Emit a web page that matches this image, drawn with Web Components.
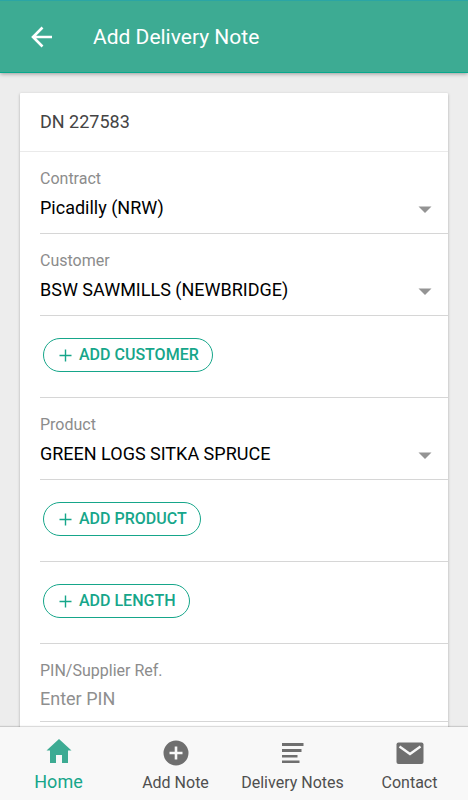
<!DOCTYPE html>
<html lang="en">
<head>
<meta charset="utf-8">
<meta name="viewport" content="width=device-width, initial-scale=1">
<title>Add Delivery Note</title>
<style>
  :root {
    --brand: #3dab93;
    --brand-strong: #16a68a;
    --line: #d6d6d6;
    --muted: #8c8c8c;
  }
  html, body { height: 100%; margin: 0; }
  body { font-family: Roboto, "Liberation Sans", sans-serif; color: #000; background: #ededed; }
</style>
</head>
<body>
<delivery-app></delivery-app>

<template id="t-app">
  <style>
    :host { display: flex; flex-direction: column; height: 100vh; }
    main { flex: 1; min-height: 0; overflow: hidden; padding: 20px 20px 0; }
    nav { display: grid; grid-template-columns: repeat(4, 1fr); flex: none; background: #f8f8f8;
      box-shadow: 0 -1px 1px rgba(0,0,0,.14); position: relative; }
  </style>
  <app-header>Add Delivery Note</app-header>
  <main>
    <form-card>
      <span slot="title">DN 227583</span>
      <select-field label="Contract" value="Picadilly (NRW)"></select-field>
      <select-field label="Customer" value="BSW SAWMILLS (NEWBRIDGE)"></select-field>
      <add-row>ADD CUSTOMER</add-row>
      <select-field label="Product" value="GREEN LOGS SITKA SPRUCE"></select-field>
      <add-row>ADD PRODUCT</add-row>
      <add-row>ADD LENGTH</add-row>
      <text-field label="PIN/Supplier Ref." placeholder="Enter PIN"></text-field>
    </form-card>
  </main>
  <nav aria-label="Main">
    <nav-tab active>
      <svg slot="icon" width="26" height="26" viewBox="0 0 26 26"><path d="M13 1 .5 12.600h3.500V25h6v-8h6v8h6V12.600h3.500z"/></svg>Home</nav-tab>
    <nav-tab>
      <svg slot="icon" width="26" height="26" viewBox="0 0 26 26"><path fill-rule="evenodd" d="M13 .5a12.500 12.500 0 1 0 0 25 12.500 12.500 0 0 0 0-25zM11.700 6.500h2.600v5.200h5.200v2.600h-5.200v5.200h-2.600v-5.200H6.500v-2.600h5.200z"/></svg>Add Note</nav-tab>
    <nav-tab>
      <svg slot="icon" width="26" height="26" viewBox="0 0 26 26"><path d="M2 3h21.500v3H2zM2 9h19.500v3H2zM2 15h15.500v2.500H2zM2 20.500h17.500v2.500H2z"/></svg>Delivery Notes</nav-tab>
    <nav-tab>
      <svg slot="icon" width="28" height="26" viewBox="0 0 28 26"><rect x=".5" y="2.500" width="27" height="21.500" rx="2"/><path d="m3.500 6.500 10.500 7.500 10.500-7.500" fill="none" stroke="#f8f8f8" stroke-width="2.400"/></svg>Contact</nav-tab>
  </nav>
</template>

<template id="t-header">
  <style>
    :host { display: block; flex: none; position: relative; background: var(--brand); color: #fff;
      border-top: 1px solid #2ba5a5; border-bottom: 1px solid #08a88c; box-shadow: 0 1px 4px rgba(0,0,0,.35); }
    header { display: flex; align-items: center; gap: 36px; height: 71px; padding: 0 25px; }
    button { display: flex; padding: 0; border: 0; background: none; color: inherit; cursor: pointer; }
    h1 { margin: 0; font-size: 21px; line-height: 28px; font-weight: 400; }
  </style>
  <header>
    <button type="button" aria-label="Back"><svg width="32" height="32" viewBox="0 0 32 32" fill="none" stroke="currentColor" stroke-width="2.600"><path d="M27 16H8M17.500 6.500 8 16l9.500 9.500"/></svg></button>
    <h1><slot></slot></h1>
  </header>
</template>

<template id="t-card">
  <style>
    :host { display: block; background: #fff; border-radius: 1px; box-shadow: 0 1px 3px rgba(0,0,0,.28); }
    h2 { margin: 0; padding: 17px 20px 17px; font-size: 18px; line-height: 24px; font-weight: 400; color: #444;
      border-bottom: 1px solid #eaeaea; }
    form { padding: 0 0 20px 20px; }
  </style>
  <h2><slot name="title"></slot></h2>
  <form><slot></slot></form>
</template>

<template id="t-select">
  <style>
    :host { display: block; padding: 17px 16px 13px 0; border-bottom: 1px solid var(--line); }
    label { display: block; margin-bottom: 7px; font-size: 16px; line-height: 20px; color: var(--muted); }
    div { display: flex; align-items: center; }
    select { flex: 1; min-width: 0; appearance: none; margin: 0; padding: 0; border: 0; border-radius: 0; height: 24px;
      background: none; font: 18px/24px Roboto, "Liberation Sans", sans-serif; color: #000; }
    svg { flex: none; margin-top: 3px; pointer-events: none; fill: #949494; }
  </style>
  <label for="f"></label>
  <div><select id="f"></select><svg width="14" height="7" viewBox="0 0 14 7"><path d="M.5.500h13L7 7z"/></svg></div>
</template>

<template id="t-text">
  <style>
    :host { display: block; padding: 17px 16px 10px 0; border-bottom: 1px solid var(--line); }
    label { display: block; margin-bottom: 6px; font-size: 16px; line-height: 20px; color: var(--muted); }
    input { display: block; width: 100%; margin: 0; padding: 0; border: 0; height: 24px; background: none;
      font: 18px/24px Roboto, "Liberation Sans", sans-serif; color: #000; }
    input::placeholder { color: #8f8f8f; opacity: 1; }
  </style>
  <label for="f"></label>
  <input id="f" type="text">
</template>

<template id="t-add">
  <style>
    :host { display: flex; padding: 22px 16px 25px 3px; border-bottom: 1px solid var(--line); }
    button { display: flex; align-items: center; gap: 7px; height: 34px; padding: 0 13px 0 15px;
      border: 1px solid var(--brand-strong); border-radius: 17px; background: none; color: var(--brand-strong);
      font: 500 16px/20px Roboto, "Liberation Sans", sans-serif; cursor: pointer; }
  </style>
  <button type="button"><svg width="13" height="13" viewBox="0 0 13 13" fill="none" stroke="currentColor" stroke-width="1.400" aria-hidden="true"><path d="M6.500.500v12M.5 6.500h12"/></svg><span><slot></slot></span></button>
</template>

<template id="t-tab">
  <style>
    :host { display: block; color: #4f4f4f; fill: #6f6f6f; }
    :host([active]) { color: var(--brand-strong); fill: var(--brand); }
    a { display: flex; flex-direction: column; align-items: center; gap: 5px; height: 60px; padding-top: 13px;
      color: inherit; text-decoration: none; font-size: 16px; line-height: 24px; white-space: nowrap; }
    :host([active]) a { font-size: 18px; padding-top: 11px; height: 62px; gap: 6px; }
  </style>
  <a href="#"><slot name="icon"></slot><span><slot></slot></span></a>
</template>

<script>
  class Base extends HTMLElement {
    constructor() {
      super();
      this.attachShadow({ mode: "open" })
        .append(document.getElementById(this.constructor.template).content.cloneNode(true));
    }
  }
  class AppHeader extends Base { static template = "t-header"; }
  class FormCard extends Base { static template = "t-card"; }
  class AddRow extends Base { static template = "t-add"; }
  class SelectField extends Base {
    static template = "t-select";
    connectedCallback() {
      this.shadowRoot.querySelector("label").textContent = this.getAttribute("label");
      this.shadowRoot.querySelector("select").replaceChildren(new Option(this.getAttribute("value")));
    }
  }
  class TextField extends Base {
    static template = "t-text";
    connectedCallback() {
      this.shadowRoot.querySelector("label").textContent = this.getAttribute("label");
      this.shadowRoot.querySelector("input").placeholder = this.getAttribute("placeholder");
    }
  }
  class NavTab extends Base {
    static template = "t-tab";
    connectedCallback() {
      if (this.hasAttribute("active")) this.shadowRoot.querySelector("a").setAttribute("aria-current", "page");
    }
  }
  class DeliveryApp extends Base { static template = "t-app"; }
  customElements.define("app-header", AppHeader);
  customElements.define("form-card", FormCard);
  customElements.define("add-row", AddRow);
  customElements.define("select-field", SelectField);
  customElements.define("text-field", TextField);
  customElements.define("nav-tab", NavTab);
  customElements.define("delivery-app", DeliveryApp);
</script>
</body>
</html>
